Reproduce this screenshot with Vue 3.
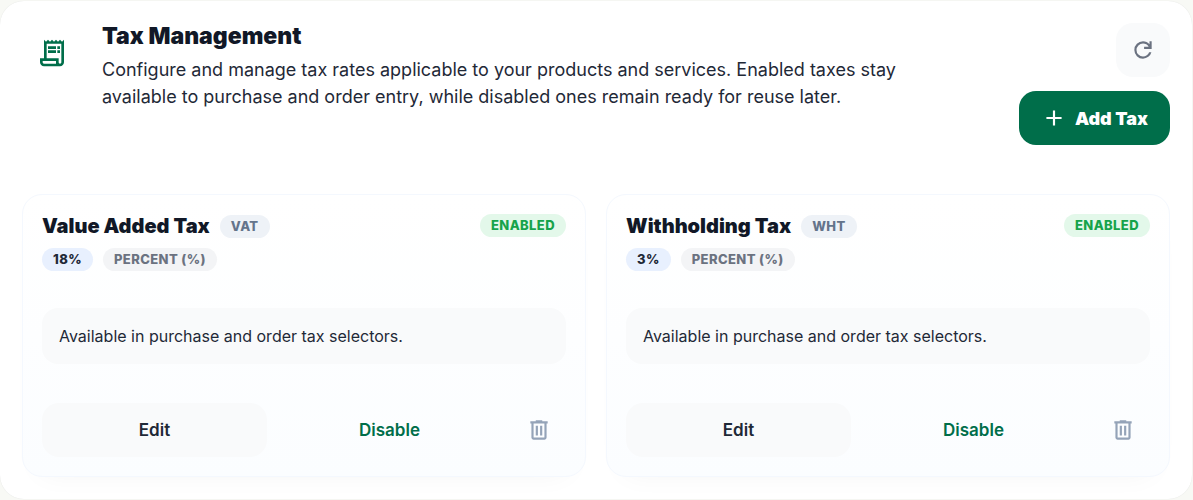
<script setup>
import { ref } from 'vue'

const taxes = ref([
  { code: 'VAT', name: 'Value Added Tax', rate: '18%', type: 'Percent (%)', enabled: true },
  { code: 'WHT', name: 'Withholding Tax', rate: '3%', type: 'Percent (%)', enabled: true },
])
</script>

<template>
  <main class="panel">
    <header class="head">
      <div class="head-icon">
        <svg class="receipt" viewBox="0 0 24 24" aria-hidden="true">
          <path fill-rule="evenodd" d="M19.5 3.5 18 2l-1.5 1.5L15 2l-1.5 1.5L12 2l-1.5 1.5L9 2 7.5 3.5 6 2v14H3v3c0 1.66 1.34 3 3 3h12c1.66 0 3-1.34 3-3V2l-1.5 1.5zM15 20H6c-.55 0-1-.45-1-1v-1h10v2zm4-1c0 .55-.45 1-1 1s-1-.45-1-1v-3H8V5h11v14z" />
          <path d="M9 7h6v2H9zM16 7h2v2h-2zM9 10h6v2H9zM16 10h2v2h-2z" />
        </svg>
      </div>
      <div class="head-text">
        <h1>Tax Management</h1>
        <p>Configure and manage tax rates applicable to your products and services. Enabled taxes stay available to purchase and order entry, while disabled ones remain ready for reuse later.</p>
      </div>
      <div class="head-actions">
        <button type="button" class="btn soft square refresh" aria-label="Refresh">
          <svg class="icon" viewBox="0 -960 960 960" aria-hidden="true">
            <path d="M480-160q-134 0-227-93t-93-227q0-134 93-227t227-93q69 0 132 28.5T720-690v-110h80v280H520v-80h168q-32-56-87.5-88T480-720q-100 0-170 70t-70 170q0 100 70 170t170 70q77 0 139-44t87-116h84q-28 106-114 173t-196 67Z" />
          </svg>
        </button>
        <button type="button" class="btn primary">
          <svg class="icon" viewBox="0 0 24 24" aria-hidden="true">
            <path d="M19 13h-6v6h-2v-6H5v-2h6V5h2v6h6z" />
          </svg>
          Add Tax
        </button>
      </div>
    </header>

    <section class="cards">
      <article v-for="tax in taxes" :key="tax.code" class="card">
        <div class="card-top">
          <div class="card-info">
            <div class="row">
              <h2>{{ tax.name }}</h2>
              <span class="chip code">{{ tax.code }}</span>
            </div>
            <div class="row">
              <span class="chip rate">{{ tax.rate }}</span>
              <span class="chip type">{{ tax.type }}</span>
            </div>
          </div>
          <span class="chip status">{{ tax.enabled ? 'Enabled' : 'Disabled' }}</span>
        </div>
        <p class="note">Available in purchase and order tax selectors.</p>
        <div class="card-actions">
          <button type="button" class="btn soft">Edit</button>
          <button type="button" class="btn text">Disable</button>
          <button type="button" class="btn square trash" :aria-label="`Delete ${tax.name}`">
            <svg class="icon" viewBox="0 -960 960 960" aria-hidden="true">
              <path d="M280-120q-33 0-56.5-23.5T200-200v-520h-40v-80h200v-40h240v40h200v80h-40v520q0 33-23.5 56.5T680-120H280Zm400-600H280v520h400v-520ZM360-280h80v-360h-80v360Zm160 0h80v-360h-80v360Z" />
            </svg>
          </button>
        </div>
      </article>
    </section>
  </main>
</template>

<style>
body {
  background: #f8f9f5;
}
</style>

<style scoped>
.panel {
  box-sizing: border-box;
  margin: 1px 1px 1px 0;
  padding: 22px;
  border-radius: 24px;
  background: #fff;
  box-shadow: 0 0 1px rgba(15, 23, 42, 0.12);
  color: #1f2937;
  font-family: Inter, "Liberation Sans", sans-serif;
}

.head {
  display: flex;
  align-items: flex-start;
  gap: 20px;
  margin-bottom: 49px;
}

.head-icon {
  display: grid;
  flex: none;
  place-items: center;
  width: 60px;
  height: 60px;
}

svg {
  fill: currentColor;
}

.receipt {
  width: 32px;
  height: 32px;
  color: #006e4a;
}

.head-text {
  flex: 1;
}

h1,
h2,
p {
  margin: 0;
}

h1 {
  color: #111827;
  font-size: 23px;
  font-weight: 900;
  line-height: 26px;
}

.head-text p {
  max-width: 800px;
  margin-top: 7px;
  font-size: 18px;
  line-height: 27px;
}

.head-actions {
  display: flex;
  flex-direction: column;
  align-items: flex-end;
  gap: 14px;
}

.btn {
  display: flex;
  align-items: center;
  justify-content: center;
  gap: 10px;
  height: 54px;
  padding: 0 22px;
  border: 0;
  border-radius: 17px;
  background: transparent;
  font-family: inherit;
  font-size: 17px;
  font-weight: 600;
  color: #1f2937;
  cursor: pointer;
}

.icon {
  width: 26px;
  height: 26px;
}

.soft {
  background: #f9fafb;
}

.square {
  width: 54px;
  padding: 0;
}

.refresh {
  color: #6b7280;
}

.primary {
  background: #006e4a;
  color: #fff;
  font-size: 18px;
  font-weight: 900;
  gap: 8px;
}

.text {
  color: #006e4a;
}

.trash {
  color: #94a3b8;
}

.cards {
  display: grid;
  grid-template-columns: 1fr 1fr;
  gap: 20px;
}

.card {
  padding: 19px;
  border: 1px solid #f4f8fe;
  border-radius: 20px;
  background: linear-gradient(180deg, #fff, #fbfdff);
  box-shadow: 0 14px 28px -20px rgba(15, 23, 42, 0.06);
}

.card-top {
  display: flex;
  align-items: flex-start;
  justify-content: space-between;
}

.card-info {
  display: grid;
  gap: 10px;
}

.row {
  display: flex;
  align-items: center;
  gap: 10px;
}

h2 {
  color: #111827;
  font-size: 20px;
  font-weight: 900;
  line-height: 24px;
}

.chip {
  padding: 0 11px;
  border-radius: 12px;
  font-size: 13px;
  font-weight: 800;
  line-height: 23px;
  letter-spacing: 0.4px;
  text-transform: uppercase;
}

.code {
  background: #eef2f7;
  color: #64748b;
}

.rate {
  background: #e8f0fe;
  color: #1f2937;
}

.type {
  background: #f3f4f6;
  color: #6b7280;
}

.status {
  background: #e3f8ea;
  color: #16a34a;
}

.note {
  margin: 37px 0 39px;
  padding: 16px 17px;
  border-radius: 16px;
  background: #f9fafb;
  font-size: 16px;
  line-height: 24px;
}

.card-actions {
  display: grid;
  grid-template-columns: 1fr 1fr 54px;
  gap: 10px;
}
</style>
